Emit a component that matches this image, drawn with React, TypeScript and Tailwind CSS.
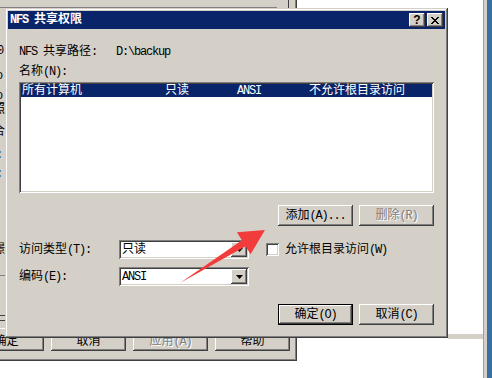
import React from "react";

function T({ s }: { s: string }) {
  const parts = s.match(/[\x00-\x7f]+|[^\x00-\x7f]+/g) || [];
  return (
    <>
      {parts.map((p, i) =>
        /^[\x00-\x7f]/.test(p) ? (
          <span key={i} className="tracking-[-1.2px]">
            {p}
          </span>
        ) : (
          <span key={i}>{p}</span>
        )
      )}
    </>
  );
}

const raised =
  "shadow-[inset_-1px_-1px_0_#404040,inset_1px_1px_0_#ffffff,inset_-2px_-2px_0_#808080,inset_2px_2px_0_#d4d0c8]";
const sunken =
  "shadow-[inset_1px_1px_0_#808080,inset_-1px_-1px_0_#ffffff,inset_2px_2px_0_#404040,inset_-2px_-2px_0_#d4d0c8]";

function Btn({ label, disabled, def, w = "w-[75px]" }: { label: string; disabled?: boolean; def?: boolean; w?: string }) {
  return (
    <div
      className={`${w} h-[21px] flex items-center justify-center bg-[#d4d0c8] whitespace-pre ${
        def
          ? "shadow-[inset_0_0_0_1px_#000000,inset_-2px_-2px_0_#404040,inset_2px_2px_0_#ffffff,inset_-3px_-3px_0_#808080]"
          : raised
      } ${disabled ? "text-[#808080] [text-shadow:1px_1px_0_#ffffff]" : "text-black"}`}
    >
      <T s={label} />
    </div>
  );
}

function Combo({ value }: { value: string }) {
  return (
    <div className={`w-[130px] h-[19px] bg-white p-[2px] flex items-stretch ${sunken}`}>
      <div className="flex-1 flex items-center pl-[1px] whitespace-pre">
        <T s={value} />
      </div>
      <div className={`w-[16px] bg-[#d4d0c8] flex items-center justify-center ${raised}`}>
        <svg width="7" height="4" viewBox="0 0 7 4">
          <path d="M0 0h7L3.5 4z" fill="#000" />
        </svg>
      </div>
    </div>
  );
}

export default function App() {
  return (
    <div className="relative w-[492px] h-[378px] overflow-hidden bg-white text-[12px] leading-[12px] text-black font-['Liberation_Mono','Noto_Sans_CJK_SC',monospace]">
      {/* window behind */}
      <div className="absolute left-0 top-0 w-[297px] h-[361px] bg-[#d4d0c8] flex flex-col justify-end pb-[10px] shadow-[inset_-1px_-1px_0_#404040,inset_-2px_-2px_0_#808080]">
        <div className="absolute left-0 top-[7px] w-[277px] h-[1px] bg-[#808080]" />
        <div className="absolute left-[288px] top-0 w-[1px] h-[9px] bg-[#404040]" />
        <div className="absolute left-0 top-[275px] w-[6px] h-[1px] bg-[#808080]" />
        <div className="absolute left-0 top-[315px] w-[6px] h-[1px] bg-[#404040]" />
        <div className="absolute left-0 top-[320px] w-[6px] h-[1px] bg-[#404040]" />
        <div className="absolute left-[-6px] top-[22px] text-black">)</div>
        <div className="absolute left-[-3px] top-[45px] text-black">0</div>
        <div className="absolute left-[-4px] top-[70px] text-black">o</div>
        <div className="absolute left-[-4px] top-[90px] text-black">o</div>
        <div className="absolute left-[-7px] top-[104px] text-black">照</div>
        <div className="absolute left-[-7px] top-[126px] text-black">合</div>
        <div className="absolute left-[-4px] top-[149px] text-black">:</div>
        <div className="absolute left-[-4px] top-[168px] text-black">:</div>
        <div className="absolute left-[-7px] top-[244px] text-black">璟</div>
        <div className="flex gap-[7px] ml-[-31px]">
          <div className={`w-[75px] h-[23px] flex items-end pb-[3px] justify-center ${raised}`}>确定</div>
          <div className={`w-[75px] h-[23px] flex items-end pb-[3px] justify-center ${raised}`}>取消</div>
          <div className={`w-[75px] h-[23px] flex items-end pb-[3px] justify-center text-[#808080] [text-shadow:1px_1px_0_#ffffff] ${raised}`}>
            <T s="应用(A)" />
          </div>
          <div className={`w-[75px] h-[23px] flex items-end pb-[3px] justify-center ${raised}`}>帮助</div>
        </div>
      </div>

      {/* right desktop strips */}
      <div className="absolute left-[483px] top-0 w-[4px] h-full bg-[#d4d0c8] border-l border-[#a0a0a0]" />
      <div className="absolute left-[487px] top-0 w-[5px] h-full bg-[#3a6ea5]" />
      <div className="absolute left-[448px] top-[334px] w-[35px] h-[5px] bg-[#d4d0c8]" />

      {/* dialog */}
      <div className="absolute left-[5px] top-[8px] w-[443px] h-[330px] bg-[#d4d0c8] p-[3px] flex flex-col shadow-[inset_-1px_-1px_0_#404040,inset_1px_1px_0_#d4d0c8,inset_-2px_-2px_0_#808080,inset_2px_2px_0_#ffffff]">
        <div className="h-[18px] bg-[#0a246a] flex items-center pl-[2px] pr-[2px] text-white font-bold">
          <span className="whitespace-pre">
            <T s="NFS 共享权限" />
          </span>
          <div className="ml-auto flex gap-[2px]">
            <div className={`w-[16px] h-[14px] bg-[#d4d0c8] flex items-center justify-center text-black font-bold text-[12px] ${raised}`}>
              <span className="font-['Liberation_Sans',sans-serif] leading-[12px] mt-[-1px]">?</span>
            </div>
            <div className={`w-[16px] h-[14px] bg-[#d4d0c8] flex items-center justify-center ${raised}`}>
              <svg width="8" height="7" viewBox="0 0 8 7" shapeRendering="crispEdges">
                <path d="M0 0h2v1h-2zM6 0h2v1h-2zM1 1h2v1h-2zM5 1h2v1h-2zM2 2h4v1h-4zM3 3h2v1h-2zM2 4h4v1h-4zM1 5h2v1h-2zM5 5h2v1h-2zM0 6h2v1h-2zM6 6h2v1h-2z" fill="#000" />
              </svg>
            </div>
          </div>
        </div>

        <div className="flex flex-col px-[11px]">
          <div className="mt-[17px] flex whitespace-pre">
            <span className="w-[97px]">
              <T s="NFS 共享路径:" />
            </span>
            <span>
              <T s="D:\backup" />
            </span>
          </div>
          <div className="mt-[8px] whitespace-pre">
            <T s="名称(N):" />
          </div>
          <div className={`mt-[4px] h-[111px] bg-white p-[2px] ${sunken}`}>
            <div className="h-[13px] bg-[#0a246a] text-white flex items-center pl-[1px] whitespace-pre">
              <span className="w-[143px]">所有计算机</span>
              <span className="w-[72px]">只读</span>
              <span className="w-[72px]">
                <T s="ANSI" />
              </span>
              <span>不允许根目录访问</span>
            </div>
          </div>
          <div className="mt-[12px] flex justify-end gap-[6px]">
            <Btn label="添加(A)..." />
            <Btn label="删除(R)" disabled />
          </div>
          <div className="mt-[14px] flex items-center h-[19px]">
            <div className="w-[100px] whitespace-pre">
              <T s="访问类型(T):" />
            </div>
            <Combo value="只读" />
            <div className={`ml-[17px] w-[13px] h-[13px] bg-white ${sunken}`} />
            <div className="ml-[6px] whitespace-pre">
              <T s="允许根目录访问(W)" />
            </div>
          </div>
          <div className="mt-[8px] flex items-center h-[19px]">
            <div className="w-[100px] whitespace-pre">
              <T s="编码(E):" />
            </div>
            <Combo value="ANSI" />
          </div>
          <div className="mt-[18px] flex justify-end gap-[6px]">
            <Btn label="确定(O)" def />
            <Btn label="取消(C)" />
          </div>
        </div>
      </div>

      {/* red arrow */}
      <svg className="absolute left-0 top-0 pointer-events-none" width="492" height="378" viewBox="0 0 492 378">
        <polygon points="180,283 241.9,240.3 236.9,232.2 265,230 250.6,254.3 245.6,246.2" fill="#f23c3c" />
      </svg>
    </div>
  );
}
